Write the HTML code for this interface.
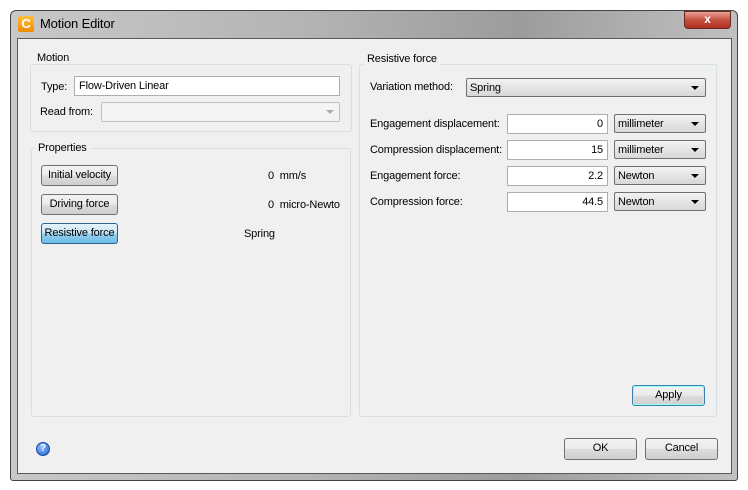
<!DOCTYPE html>
<html><head><style>
*{box-sizing:border-box}
body{margin:0;width:748px;height:490px;background:#fff;font-family:"Liberation Sans",sans-serif;font-size:11px;letter-spacing:-0.15px;color:#000;position:relative;overflow:hidden}
.a{position:absolute}
.win{left:10px;top:10px;width:728px;height:471px;border:1px solid #444;border-radius:6px 6px 3px 3px;background:linear-gradient(90deg,#c8c8c8 0%,#b4b4b4 40%,#9c9c9c 70%,#c0c0c0 100%)}
.client{left:17px;top:38px;width:715px;height:436px;background:#f0f0f0;border:1px solid #5a5a5a}
.grp{border:1px solid #d5dfe5;border-radius:3px}
.gt{background:#f0f0f0;padding:0 3px;font-size:11px}
.inp{background:#fff;border:1px solid #abadb3;height:20px;line-height:19px;padding:0 4px}
.btn{border:1px solid #707070;border-radius:3px;background:linear-gradient(#f2f2f2,#ebebeb 50%,#dddddd 51%,#cfcfcf);text-align:center;line-height:19px}
.cb{border:1px solid #707070;border-radius:2px;background:linear-gradient(#f2f2f2,#e5e5e5 50%,#d8d8d8);height:19px;line-height:18px;padding-left:3px}
.cb:after{content:"";position:absolute;right:6px;top:7px;border-left:4px solid transparent;border-right:4px solid transparent;border-top:4px solid #000}
</style></head><body>
<div class="a win"></div>
<div class="a" style="left:18px;top:16px;width:16px;height:16px;background:linear-gradient(#ffc040,#f08a00);border-radius:2px;color:#fff;font-weight:bold;font-size:13px;line-height:16px;text-align:center">C</div>
<div class="a" style="left:40px;top:16px;font-size:13px">Motion Editor</div>
<div class="a" style="left:684px;top:11px;width:47px;height:18px;border:1px solid #6b2a20;border-radius:0 0 4px 4px;background:linear-gradient(#e8a093,#c75040 50%,#b03020);color:#fff;font-weight:bold;text-align:center;line-height:15px;font-size:12px">x</div>
<div class="a client"></div>

<div class="a grp" style="left:30px;top:64px;width:322px;height:68px"></div>
<div class="a gt" style="left:34px;top:52px">Motion</div>
<div class="a" style="left:41px;top:81px">Type:</div>
<div class="a inp" style="left:74px;top:76px;width:266px">Flow-Driven Linear</div>
<div class="a" style="left:40px;top:106px">Read from:</div>
<div class="a" style="left:101px;top:102px;width:239px;height:20px;border:1px solid #c0c0c0;border-radius:2px;background:#f4f4f4"></div>
<div class="a" style="left:326px;top:110px;border-left:4px solid transparent;border-right:4px solid transparent;border-top:4px solid #aaa"></div>

<div class="a grp" style="left:31px;top:148px;width:320px;height:269px"></div>
<div class="a gt" style="left:35px;top:142px">Properties</div>
<div class="a btn" style="left:41px;top:165px;width:77px;height:21px">Initial velocity</div>
<div class="a btn" style="left:41px;top:194px;width:77px;height:21px">Driving force</div>
<div class="a btn" style="left:41px;top:223px;width:77px;height:21px;border-color:#2c628b;background:linear-gradient(#e5f4fc,#c4e5f6 50%,#98d1ef 51%,#6cbbe6)">Resistive force</div>
<div class="a" style="left:268px;top:170px">0&nbsp; mm/s</div>
<div class="a" style="left:268px;top:199px">0&nbsp; micro-Newto</div>
<div class="a" style="left:244px;top:228px">Spring</div>

<div class="a grp" style="left:359px;top:64px;width:358px;height:353px"></div>
<div class="a gt" style="left:364px;top:53px">Resistive force</div>
<div class="a" style="left:370px;top:81px">Variation method:</div>
<div class="a cb" style="left:466px;top:78px;width:240px">Spring</div>

<div class="a" style="left:370px;top:118px">Engagement displacement:</div>
<div class="a inp" style="left:507px;top:114px;width:101px;text-align:right">0</div>
<div class="a cb" style="left:614px;top:114px;width:92px">millimeter</div>
<div class="a" style="left:370px;top:144px">Compression displacement:</div>
<div class="a inp" style="left:507px;top:140px;width:101px;text-align:right">15</div>
<div class="a cb" style="left:614px;top:140px;width:92px">millimeter</div>
<div class="a" style="left:370px;top:170px">Engagement force:</div>
<div class="a inp" style="left:507px;top:166px;width:101px;text-align:right">2.2</div>
<div class="a cb" style="left:614px;top:166px;width:92px">Newton</div>
<div class="a" style="left:370px;top:196px">Compression force:</div>
<div class="a inp" style="left:507px;top:192px;width:101px;text-align:right">44.5</div>
<div class="a cb" style="left:614px;top:192px;width:92px">Newton</div>

<div class="a btn" style="left:632px;top:385px;width:73px;height:21px;border-color:#3c7fb1;box-shadow:inset 0 0 0 1px #9fe">Apply</div>
<div class="a" style="left:36px;top:442px;width:14px;height:14px;border-radius:50%;background:radial-gradient(circle at 40% 35%,#8fc0ff,#1f5fcf);border:1px solid #1a4aa0;color:#fff;font-size:10px;font-weight:bold;text-align:center;line-height:12px">?</div>
<div class="a btn" style="left:564px;top:438px;width:73px;height:22px">OK</div>
<div class="a btn" style="left:645px;top:438px;width:73px;height:22px">Cancel</div>
</body></html>
